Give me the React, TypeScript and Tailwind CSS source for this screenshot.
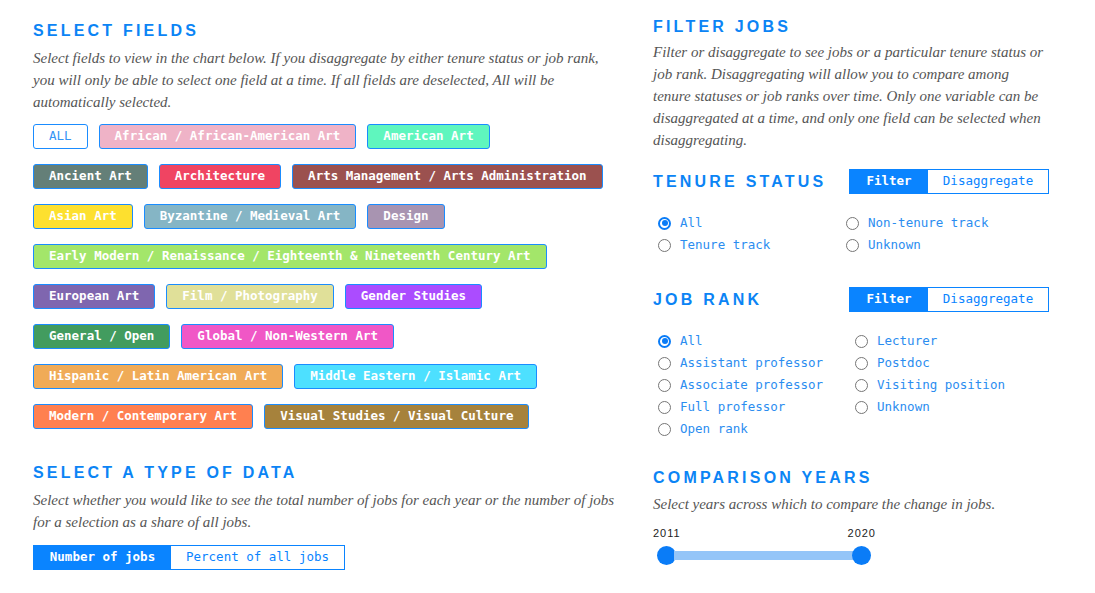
import { useState } from "react";

type Field = { name: string; bg: string };

// rows are laid out as in the chart controls
const fieldRows: Field[][] = [
  [
    { name: "African / African-American Art", bg: "bg-[#efb3c7]" },
    { name: "American Art", bg: "bg-[#5ff6be]" },
  ],
  [
    { name: "Ancient Art", bg: "bg-[#647f78]" },
    { name: "Architecture", bg: "bg-[#f04462]" },
    { name: "Arts Management / Arts Administration", bg: "bg-[#9b514f]" },
  ],
  [
    { name: "Asian Art", bg: "bg-[#fde02f]" },
    { name: "Byzantine / Medieval Art", bg: "bg-[#85b5c5]" },
    { name: "Design", bg: "bg-[#a894b1]" },
  ],
  [{ name: "Early Modern / Renaissance / Eighteenth & Nineteenth Century Art", bg: "bg-[#a3e66a]" }],
  [
    { name: "European Art", bg: "bg-[#7f66af]" },
    { name: "Film / Photography", bg: "bg-[#e0e099]" },
    { name: "Gender Studies", bg: "bg-[#ab4cff]" },
  ],
  [
    { name: "General / Open", bg: "bg-[#429c5f]" },
    { name: "Global / Non-Western Art", bg: "bg-[#f057c6]" },
  ],
  [
    { name: "Hispanic / Latin American Art", bg: "bg-[#f0ab57]" },
    { name: "Middle Eastern / Islamic Art", bg: "bg-[#4de0ff]" },
  ],
  [
    { name: "Modern / Contemporary Art", bg: "bg-[#ff8050]" },
    { name: "Visual Studies / Visual Culture", bg: "bg-[#a6823c]" },
  ],
];

const mono = "font-['DejaVu_Sans_Mono','Liberation_Mono',monospace] text-[12.5px]";
const serif = "font-['Liberation_Serif',serif] italic text-[15px] leading-[22px] text-[#555]";
const heading =
  "font-['Liberation_Sans',Arial,sans-serif] text-[16px] font-bold leading-[20px] tracking-[0.2em] text-[#0b84f5]";

function Radio({ label, checked, onClick }: { label: string; checked: boolean; onClick: () => void }) {
  return (
    <button type="button" onClick={onClick} className="flex h-[22px] items-center text-left">
      <span
        className={
          checked
            ? "ml-[5px] mr-[9px] flex h-[13px] w-[13px] items-center justify-center rounded-full border-2 border-[#0a7cf7]"
            : "ml-[5px] mr-[9px] flex h-[13px] w-[13px] items-center justify-center rounded-full border border-[#767676]"
        }
      >
        {checked ? <span className="h-[6px] w-[6px] rounded-full bg-[#0a7cf7]" /> : null}
      </span>
      <span className={`${mono} text-[#2b8df0]`}>{label}</span>
    </button>
  );
}

function Toggle({ value, onChange }: { value: string; onChange: (v: string) => void }) {
  return (
    <div className={`flex h-[25px] border border-[#0a84ff] ${mono}`}>
      {["Filter", "Disaggregate"].map((v) => (
        <button
          key={v}
          type="button"
          onClick={() => onChange(v)}
          className={
            value === v
              ? `flex items-center justify-center bg-[#0a84ff] font-bold text-white ${v === "Filter" ? "w-[78px]" : "w-[120px]"}`
              : `flex items-center justify-center bg-white text-[#0a84ff] ${v === "Filter" ? "w-[78px]" : "w-[120px]"}`
          }
        >
          {v}
        </button>
      ))}
    </div>
  );
}

export default function App() {
  const [selected, setSelected] = useState<string[]>([]);
  const [dataType, setDataType] = useState("number");
  const [tenureMode, setTenureMode] = useState("Filter");
  const [rankMode, setRankMode] = useState("Filter");
  const [tenure, setTenure] = useState("All");
  const [rank, setRank] = useState("All");

  function toggleField(name: string) {
    setSelected((s) => (s.includes(name) ? s.filter((x) => x !== name) : [...s, name]));
  }

  return (
    <div className="flex min-h-[593px] w-[1095px] bg-white">
      <div className="ml-[33px] w-[590px] pt-[21px]">
        <h2 className={heading}>SELECT FIELDS</h2>
        <p className={`mt-[6px] whitespace-nowrap ${serif}`}>
          Select fields to view in the chart below. If you disaggregate by either tenure status or job rank,
          <br />
          you will only be able to select one field at a time. If all fields are deselected, All will be
          <br />
          automatically selected.
        </p>

        <div className="mt-[11px] flex flex-col gap-[15px]">
          {fieldRows.map((row, i) => (
            <div key={i} className="flex gap-[11px]">
              {i === 0 ? (
                <button
                  type="button"
                  onClick={() => setSelected([])}
                  className={`flex h-[25px] items-center rounded-[3px] border border-[#1a8cff] bg-white px-[15px] text-[#3394f5] ${mono}`}
                >
                  ALL
                </button>
              ) : null}
              {row.map((f) => (
                <button
                  key={f.name}
                  type="button"
                  onClick={() => toggleField(f.name)}
                  className={`flex h-[25px] items-center whitespace-nowrap rounded-[3px] border border-[#1a8cff] px-[15px] font-bold text-white ${mono} ${f.bg}`}
                >
                  {f.name}
                </button>
              ))}
            </div>
          ))}
        </div>

        <h2 className={`mt-[34px] ${heading}`}>SELECT A TYPE OF DATA</h2>
        <p className={`mt-[6px] whitespace-nowrap ${serif}`}>
          Select whether you would like to see the total number of jobs for each year or the number of jobs
          <br />
          for a selection as a share of all jobs.
        </p>
        <div className={`mt-[12px] flex h-[25px] w-fit border border-[#0a84ff] ${mono}`}>
          <button
            type="button"
            onClick={() => setDataType("number")}
            className={
              dataType === "number"
                ? "flex w-[137px] items-center justify-center bg-[#0a84ff] font-bold text-white"
                : "flex w-[137px] items-center justify-center bg-white text-[#0a84ff]"
            }
          >
            Number of jobs
          </button>
          <button
            type="button"
            onClick={() => setDataType("percent")}
            className={
              dataType === "percent"
                ? "flex w-[173px] items-center justify-center bg-[#0a84ff] font-bold text-white"
                : "flex w-[173px] items-center justify-center bg-white text-[#0a84ff]"
            }
          >
            Percent of all jobs
          </button>
        </div>
      </div>

      <div className="ml-[30px] w-[396px] pt-[17px]">
        <h2 className={heading}>FILTER JOBS</h2>
        <p className={`mt-[4px] whitespace-nowrap ${serif}`}>
          Filter or disaggregate to see jobs or a particular tenure status or
          <br />
          job rank. Disaggregating will allow you to compare among
          <br />
          tenure statuses or job ranks over time. Only one variable can be
          <br />
          disaggregated at a time, and only one field can be selected when
          <br />
          disaggregating.
        </p>

        <div className="mt-[18px] flex items-center justify-between">
          <h3 className={heading}>TENURE STATUS</h3>
          <Toggle value={tenureMode} onChange={setTenureMode} />
        </div>
        <div className="mt-[18px] flex">
          <div className="flex w-[188px] flex-col">
            {["All", "Tenure track"].map((t) => (
              <Radio key={t} label={t} checked={tenure === t} onClick={() => setTenure(t)} />
            ))}
          </div>
          <div className="flex flex-col">
            {["Non-tenure track", "Unknown"].map((t) => (
              <Radio key={t} label={t} checked={tenure === t} onClick={() => setTenure(t)} />
            ))}
          </div>
        </div>

        <div className="mt-[31px] flex items-center justify-between">
          <h3 className={heading}>JOB RANK</h3>
          <Toggle value={rankMode} onChange={setRankMode} />
        </div>
        <div className="mt-[18px] flex">
          <div className="flex w-[197px] flex-col">
            {["All", "Assistant professor", "Associate professor", "Full professor", "Open rank"].map((r) => (
              <Radio key={r} label={r} checked={rank === r} onClick={() => setRank(r)} />
            ))}
          </div>
          <div className="flex flex-col">
            {["Lecturer", "Postdoc", "Visiting position", "Unknown"].map((r) => (
              <Radio key={r} label={r} checked={rank === r} onClick={() => setRank(r)} />
            ))}
          </div>
        </div>

        <h2 className={`mt-[28px] ${heading}`}>COMPARISON YEARS</h2>
        <p className={`mt-[5px] ${serif}`}>Select years across which to compare the change in jobs.</p>
        <div className="mt-[11px] flex w-[223px] justify-between font-['Liberation_Sans',Arial,sans-serif] text-[11px] leading-[14px] tracking-[1px] text-[#222]">
          <span>2011</span>
          <span>2020</span>
        </div>
        <div className="ml-[4px] mt-[6px] flex w-[214px] items-center">
          <span className="h-[19px] w-[19px] shrink-0 rounded-full bg-[#0a7cf7]" />
          <span className="-mx-[2px] h-[9px] flex-1 bg-[#94c5f8]" />
          <span className="h-[19px] w-[19px] shrink-0 rounded-full bg-[#0a7cf7]" />
        </div>
      </div>
    </div>
  );
}
